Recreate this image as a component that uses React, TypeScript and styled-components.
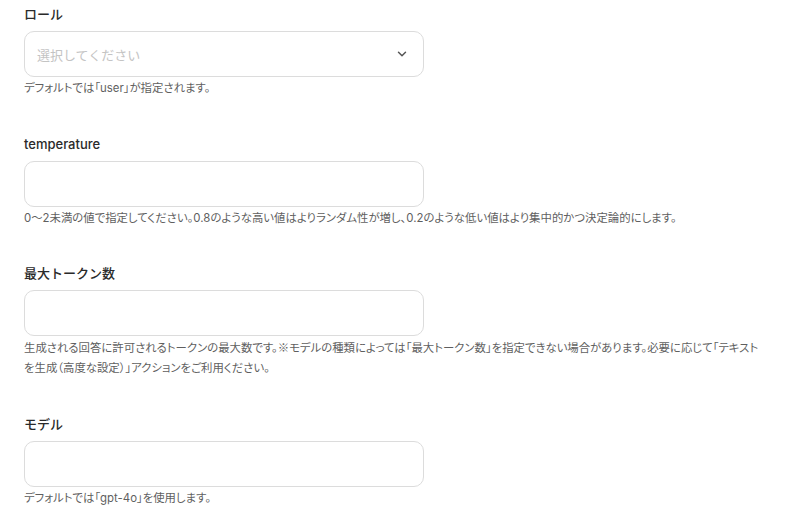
import React from "react";
import styled, { createGlobalStyle } from "styled-components";
import { ChevronDown } from "lucide-react";

const GlobalStyle = createGlobalStyle`
  body {
    margin: 0;
    background: #fff;
    font-family: Inter, "Noto Sans CJK JP", sans-serif;
    color: #222;
  }
`;

const Form = styled.div`
  padding: 4px 24px 0;
  display: flex;
  flex-direction: column;
  gap: 35.5px;
`;

const Field = styled.div`
  display: flex;
  flex-direction: column;
`;

const Label = styled.label`
  font-size: 13px;
  line-height: 20px;
  font-weight: 500;
  color: #2a2a2a;
  margin-bottom: 7px;
`;

const Box = styled.div`
  box-sizing: border-box;
  width: 400px;
  height: 46px;
  border: 1px solid #dcdcdc;
  border-radius: 10px;
  background: #fff;
  display: flex;
  align-items: center;
  justify-content: space-between;
  padding: 0 14px 0 12px;
`;

const Placeholder = styled.span`
  font-size: 13px;
  color: #c4c4c4;
`;

const Help = styled.p`
  margin: 1px 0 0;
  font-size: 11.4px;
  line-height: 20px;
  color: #5f5f5f;
  font-feature-settings: "palt";
  max-width: 740px;
`;

// the reference mark reads better in the Japanese face than Inter's
const Note = styled.span`
  font-family: "Noto Sans CJK JP", sans-serif;
`;

interface IFieldProps {
  label: string;
  help: React.ReactNode;
  select?: boolean;
}

const FormField: React.FC<IFieldProps> = ({ label, help, select }) => (
  <Field>
    <Label>{label}</Label>
    <Box>
      {select && (
        <>
          <Placeholder>選択してください</Placeholder>
          <ChevronDown size={14} strokeWidth={2.5} color="#555" />
        </>
      )}
    </Box>
    <Help>{help}</Help>
  </Field>
);

const App = () => (
  <>
    <GlobalStyle />
    <Form>
      <FormField
        label="ロール"
        select
        help="デフォルトでは「user」が指定されます。"
      />
      <FormField
        label="temperature"
        help="0〜2未満の値で指定してください。0.8のような高い値はよりランダム性が増し、0.2のような低い値はより集中的かつ決定論的にします。"
      />
      <FormField
        label="最大トークン数"
        help={
          <>
            生成される回答に許可されるトークンの最大数です。<Note>※</Note>
            モデルの種類によっては「最大トークン数」を指定できない場合があります。必要に応じて「テキストを生成（高度な設定）」アクションをご利用ください。
          </>
        }
      />
      <FormField label="モデル" help="デフォルトでは「gpt-4o」を使用します。" />
    </Form>
  </>
);

export default App;
